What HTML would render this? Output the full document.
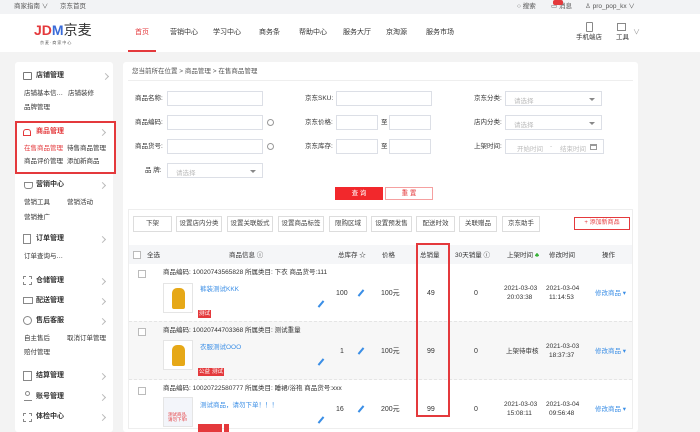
<!DOCTYPE html>
<html><head><meta charset="utf-8"><style>
*{margin:0;padding:0;box-sizing:border-box}
body{width:700px;height:428px;overflow:hidden;background:#f3f3f3;font-family:"Liberation Sans","Noto Sans CJK SC",sans-serif;color:#333;position:relative}
.a{position:absolute;white-space:nowrap}
.t{position:absolute;white-space:nowrap;font-size:7px;line-height:8px}
.in{position:absolute;border:1px solid #dcdfe6;background:#fff;height:15px}
.ph{font-size:6.5px;color:#bbb;position:absolute;left:8px;top:3px}
.dd{position:absolute;right:6px;top:6px;border-left:3px solid transparent;border-right:3px solid transparent;border-top:3px solid #888}
.btn{position:absolute;top:216px;height:16px;border:1px solid #ddd;background:#fff;font-size:6.5px;text-align:center;line-height:14px;color:#444}
.q{position:absolute;width:7px;height:7px;border:1px solid #999;border-radius:50%}
.cb{position:absolute;width:8px;height:8px;border:1px solid #bbb;background:#fff}
.blue{color:#3a8ee6}
.tag{position:absolute;background:#e4393c;color:#fff;font-size:5.5px;line-height:8px;padding:0 1px}
.img{position:absolute;width:30px;height:30px;border:1px solid #e5e5e5;background:#fff}
.pen{position:absolute;width:2px;height:8px;background:#3a8ee6;transform:rotate(40deg)}
.arr{position:absolute;right:8px;width:5px;height:5px;border-top:1px solid #bbb;border-right:1px solid #bbb;transform:rotate(45deg)}
</style></head><body>
<!-- top bar -->
<div class="a" style="left:0;top:0;width:700px;height:14px;background:#f2f3f5"></div>
<div class="t" style="left:14px;top:3px;color:#555;font-size:6.5px">商家指南 ∨</div>
<div class="t" style="left:60px;top:3px;color:#555;font-size:6.5px">京东首页</div>
<div class="t" style="left:517px;top:3px;color:#555;font-size:6.5px">○ 搜索</div>
<div class="t" style="left:551px;top:3px;color:#555;font-size:6.5px">▭ 消息</div>
<div class="a" style="left:553px;top:0;width:10px;height:5px;background:#e4393c;border-radius:2px"></div>
<div class="t" style="left:585px;top:3px;color:#555;font-size:6.5px">♙ pro_pop_kx ∨</div>
<!-- header -->
<div class="a" style="left:0;top:14px;width:700px;height:38px;background:#fff"></div>
<div class="a" style="left:34px;top:23px;font-size:14px;font-weight:bold;line-height:14px"><span style="color:#e4393c">JD</span><span style="color:#3a6bd8">M</span><span style="color:#333;font-weight:normal">京麦</span></div>
<div class="t" style="left:40px;top:39px;font-size:4px;color:#555;letter-spacing:1px">京麦·商家中心</div>
<div class="t" style="left:135px;top:29px;color:#e4393c">首页</div>
<div class="a" style="left:128px;top:50px;width:28px;height:2px;background:#e4393c"></div>
<div class="t" style="left:170px;top:29px">营销中心</div>
<div class="t" style="left:213px;top:29px">学习中心</div>
<div class="t" style="left:259px;top:29px">商务条</div>
<div class="t" style="left:299px;top:29px">帮助中心</div>
<div class="t" style="left:343px;top:29px">服务大厅</div>
<div class="t" style="left:386px;top:29px">京淘源</div>
<div class="t" style="left:426px;top:29px">服务市场</div>
<div class="a" style="left:586px;top:22px;width:7px;height:10px;border:1px solid #888;border-radius:1px"></div>
<div class="t" style="left:576px;top:34px;font-size:6.5px">手机端店</div>
<div class="a" style="left:617px;top:23px;width:9px;height:8px;border:1px solid #888"></div>
<div class="t" style="left:616px;top:34px;font-size:6.5px">工具</div>
<div class="t" style="left:633px;top:29px;color:#999">∨</div>
<!-- sidebar -->
<div class="a" style="left:15px;top:62px;width:98px;height:370px;background:#fff;border-radius:3px"></div>
<div class="a" style="left:23px;top:72px;width:9px;height:8px;border:1px solid #777;border-radius:1px"></div>
<div class="t" style="left:36px;top:72px;font-weight:bold">店铺管理</div><div class="arr" style="left:103px;top:74px"></div>
<div class="t" style="left:24px;top:90px;font-size:6.5px">店铺基本信…</div><div class="t" style="left:68px;top:90px;font-size:6.5px">店铺装修</div>
<div class="t" style="left:24px;top:104px;font-size:6.5px">品牌管理</div>
<div class="a" style="left:15px;top:121px;width:101px;height:53px;border:2px solid #e4393c;background:#fff"></div>
<div class="a" style="left:23px;top:129px;width:8px;height:7px;border:1px solid #e4393c;border-radius:3px 3px 0 0"></div>
<div class="t" style="left:36px;top:128px;font-weight:bold;color:#e4393c">商品管理</div><div class="arr" style="left:100px;top:130px"></div>
<div class="t" style="left:24px;top:145px;font-size:6.5px;color:#e4393c">在售商品管理</div><div class="t" style="left:67px;top:145px;font-size:6.5px">待售商品管理</div>
<div class="t" style="left:24px;top:158px;font-size:6.5px">商品评价管理</div><div class="t" style="left:67px;top:158px;font-size:6.5px">添加新商品</div>
<div class="a" style="left:24px;top:182px;width:9px;height:7px;border:1px solid #888;border-radius:0 0 3px 3px"></div>
<div class="t" style="left:36px;top:181px;font-weight:bold">营销中心</div><div class="arr" style="left:100px;top:183px"></div>
<div class="t" style="left:24px;top:199px;font-size:6.5px">营销工具</div><div class="t" style="left:67px;top:199px;font-size:6.5px">营销活动</div>
<div class="t" style="left:24px;top:214px;font-size:6.5px">营销推广</div>
<div class="a" style="left:23px;top:234px;width:8px;height:10px;border:1px solid #888"></div>
<div class="t" style="left:36px;top:235px;font-weight:bold">订单管理</div><div class="arr" style="left:100px;top:237px"></div>
<div class="t" style="left:24px;top:253px;font-size:6.5px">订单查询与…</div>
<div class="a" style="left:23px;top:276px;width:9px;height:9px;border:1px dashed #888"></div>
<div class="t" style="left:36px;top:277px;font-weight:bold">仓储管理</div><div class="arr" style="left:100px;top:279px"></div>
<div class="a" style="left:23px;top:297px;width:10px;height:7px;border:1px solid #888"></div>
<div class="t" style="left:36px;top:297px;font-weight:bold">配送管理</div><div class="arr" style="left:100px;top:299px"></div>
<div class="a" style="left:23px;top:316px;width:9px;height:9px;border:1px solid #888;border-radius:50%"></div>
<div class="t" style="left:36px;top:317px;font-weight:bold">售后客服</div><div class="arr" style="left:100px;top:319px"></div>
<div class="t" style="left:24px;top:335px;font-size:6.5px">自主售后</div><div class="t" style="left:67px;top:335px;font-size:6.5px">取消订单管理</div>
<div class="t" style="left:24px;top:349px;font-size:6.5px">赔付管理</div>
<div class="a" style="left:23px;top:371px;width:9px;height:10px;border:1px solid #888"></div>
<div class="t" style="left:36px;top:372px;font-weight:bold">结算管理</div><div class="arr" style="left:100px;top:374px"></div>
<div class="a" style="left:24px;top:392px;width:8px;height:9px;border-bottom:1px solid #888"></div>
<div class="a" style="left:25px;top:391px;width:5px;height:5px;border:1px solid #888;border-radius:50%"></div>
<div class="t" style="left:36px;top:393px;font-weight:bold">账号管理</div><div class="arr" style="left:100px;top:395px"></div>
<div class="a" style="left:23px;top:413px;width:9px;height:9px;border:1px dashed #888"></div>
<div class="t" style="left:36px;top:413px;font-weight:bold">体检中心</div><div class="arr" style="left:100px;top:415px"></div>
<!-- main panel -->
<div class="a" style="left:123px;top:62px;width:515px;height:370px;background:#fff;border-radius:3px"></div>
<div class="t" style="left:132px;top:68px;font-size:6.5px;color:#555">您当前所在位置 &gt; 商品管理 &gt; 在售商品管理</div>
<div class="a" style="left:128px;top:80px;width:505px;height:1px;background:#eee"></div>
<!-- form -->
<div class="t" style="left:135px;top:95px;font-size:6.5px">商品名称:</div><div class="in" style="left:167px;top:91px;width:96px"></div>
<div class="t" style="left:305px;top:95px;font-size:6.5px">京东SKU:</div><div class="in" style="left:336px;top:91px;width:96px"></div>
<div class="t" style="left:474px;top:95px;font-size:6.5px">京东分类:</div><div class="in" style="left:505px;top:91px;width:97px"><span class="ph">请选择</span><i class="dd"></i></div>

<div class="t" style="left:135px;top:119px;font-size:6.5px">商品编码:</div><div class="in" style="left:167px;top:115px;width:96px"></div><div class="q" style="left:267px;top:119px"></div>
<div class="t" style="left:305px;top:119px;font-size:6.5px">京东价格:</div><div class="in" style="left:336px;top:115px;width:42px"></div><div class="t" style="left:381px;top:119px;font-size:6.5px">至</div><div class="in" style="left:389px;top:115px;width:42px"></div>
<div class="t" style="left:474px;top:119px;font-size:6.5px">店内分类:</div><div class="in" style="left:505px;top:115px;width:97px"><span class="ph">请选择</span><i class="dd"></i></div>

<div class="t" style="left:135px;top:143px;font-size:6.5px">商品货号:</div><div class="in" style="left:167px;top:139px;width:96px"></div><div class="q" style="left:267px;top:143px"></div>
<div class="t" style="left:305px;top:143px;font-size:6.5px">京东库存:</div><div class="in" style="left:336px;top:139px;width:42px"></div><div class="t" style="left:381px;top:143px;font-size:6.5px">至</div><div class="in" style="left:389px;top:139px;width:42px"></div>
<div class="t" style="left:474px;top:143px;font-size:6.5px">上架时间:</div><div class="in" style="left:505px;top:139px;width:99px"><span class="ph" style="left:11px">开始时间</span><span class="ph" style="left:44px">-</span><span class="ph" style="left:54px">结束时间</span><span class="a" style="right:6px;top:4px;width:7px;height:6px;border:1px solid #999;border-top-width:2px"></span></div>

<div class="t" style="left:145px;top:167px;font-size:6.5px">品 牌:</div><div class="in" style="left:167px;top:163px;width:96px"><span class="ph">请选择</span><i class="dd"></i></div>
<div class="a" style="left:335px;top:187px;width:48px;height:13px;background:#f2282c;color:#fff;font-size:6.5px;text-align:center;line-height:13px">查 询</div>
<div class="a" style="left:385px;top:187px;width:48px;height:13px;border:1px solid #f5a0a0;color:#e4393c;font-size:6.5px;text-align:center;line-height:11px">重 置</div>
<!-- toolbar -->
<div class="a" style="left:128px;top:209px;width:505px;height:220px;border:1px solid #eee"></div>
<div class="btn" style="left:133px;width:39px">下架</div>
<div class="btn" style="left:176px;width:46px">设置店内分类</div>
<div class="btn" style="left:227px;width:46px">设置关联版式</div>
<div class="btn" style="left:278px;width:46px">设置商品标签</div>
<div class="btn" style="left:329px;width:38px">限购区域</div>
<div class="btn" style="left:371px;width:41px">设置预发售</div>
<div class="btn" style="left:416px;width:39px">配送时效</div>
<div class="btn" style="left:459px;width:38px">关联赠品</div>
<div class="btn" style="left:502px;width:38px">京东助手</div>
<div class="a" style="left:574px;top:217px;width:56px;height:13px;border:1px solid #e4393c;color:#e4393c;font-size:6px;text-align:center;line-height:11px">+ 添加新商品</div>
<!-- table header -->
<div class="a" style="left:129px;top:245px;width:503px;height:19px;background:#f5f6f8"></div>
<div class="cb" style="left:133px;top:251px"></div>
<div class="t" style="left:147px;top:252px;font-size:6.5px">全选</div>
<div class="t" style="left:229px;top:252px;font-size:6.5px">商品信息 ⓘ</div>
<div class="t" style="left:338px;top:252px;font-size:6.5px">总库存 ☆</div>
<div class="t" style="left:382px;top:252px;font-size:6.5px">价格</div>
<div class="t" style="left:420px;top:252px;font-size:6.5px">总销量</div>
<div class="t" style="left:455px;top:252px;font-size:6.5px">30天销量 ⓘ</div>
<div class="t" style="left:507px;top:252px;font-size:6.5px">上架时间 <span style="color:#2a2">♣</span></div>
<div class="t" style="left:549px;top:252px;font-size:6.5px">修改时间</div>
<div class="t" style="left:602px;top:252px;font-size:6.5px">操作</div>
<!-- rows -->
<div class="a" style="left:129px;top:321px;width:503px;height:59px;background:#f7f7f7;border-top:1px dashed #e5e5e5;border-bottom:1px dashed #e5e5e5"></div>
<!-- row1 -->
<div class="cb" style="left:138px;top:270px"></div>
<div class="t" style="left:163px;top:269px;font-size:6.5px">商品编码: 10020743565828 所属类目: 下衣 商品货号:111</div>
<div class="img" style="left:163px;top:283px"><div class="a" style="left:8px;top:4px;width:13px;height:21px;background:#e6a817;border-radius:5px 5px 2px 2px"></div></div>
<div class="t blue" style="left:200px;top:286px;font-size:6.5px">裤装测试KKK</div>
<div class="tag" style="left:198px;top:310px">测试</div>
<div class="pen" style="left:320px;top:300px"></div>
<div class="t" style="left:336px;top:290px">100</div><div class="pen" style="left:360px;top:289px"></div>
<div class="t" style="left:381px;top:290px">100元</div>
<div class="t" style="left:427px;top:290px">49</div>
<div class="t" style="left:474px;top:290px">0</div>
<div class="t" style="left:504px;top:285px;font-size:6.5px">2021-03-03</div><div class="t" style="left:507px;top:294px;font-size:6.5px">20:03:38</div>
<div class="t" style="left:546px;top:285px;font-size:6.5px">2021-03-04</div><div class="t" style="left:549px;top:294px;font-size:6.5px">11:14:53</div>
<div class="t blue" style="left:595px;top:290px;font-size:6.5px">修改商品 ▾</div>
<!-- row2 -->
<div class="cb" style="left:138px;top:328px"></div>
<div class="t" style="left:163px;top:327px;font-size:6.5px">商品编码: 10020744703368 所属类目: 测试重量</div>
<div class="img" style="left:163px;top:340px"><div class="a" style="left:8px;top:4px;width:13px;height:21px;background:#e6a817;border-radius:5px 5px 2px 2px"></div></div>
<div class="t blue" style="left:200px;top:344px;font-size:6.5px">衣服测试OOO</div>
<div class="tag" style="left:198px;top:368px">公益</div><div class="tag" style="left:211px;top:368px">测试</div>
<div class="pen" style="left:320px;top:358px"></div>
<div class="t" style="left:340px;top:348px">1</div><div class="pen" style="left:360px;top:347px"></div>
<div class="t" style="left:381px;top:348px">100元</div>
<div class="t" style="left:427px;top:348px">99</div>
<div class="t" style="left:474px;top:348px">0</div>
<div class="t" style="left:506px;top:348px;font-size:6.5px">上架待审核</div>
<div class="t" style="left:546px;top:343px;font-size:6.5px">2021-03-03</div><div class="t" style="left:549px;top:352px;font-size:6.5px">18:37:37</div>
<div class="t blue" style="left:595px;top:348px;font-size:6.5px">修改商品 ▾</div>
<!-- row3 -->
<div class="cb" style="left:138px;top:387px"></div>
<div class="t" style="left:163px;top:385px;font-size:6.5px">商品编码: 10020722580777 所属类目: 睡裙/浴袍 商品货号:xxx</div>
<div class="img" style="left:163px;top:397px;background:#f3f5fa"><div class="t" style="left:4px;top:14px;font-size:4.5px;color:#e4393c;line-height:5px">测试商品,<br>请勿下单!</div></div>
<div class="t blue" style="left:200px;top:402px;font-size:6.5px">测试商品，请勿下单！！！</div>
<div class="tag" style="left:198px;top:424px;width:24px">&nbsp;</div><div class="tag" style="left:224px;top:424px">&nbsp;&nbsp;</div>
<div class="pen" style="left:320px;top:416px"></div>
<div class="t" style="left:336px;top:406px">16</div><div class="pen" style="left:360px;top:405px"></div>
<div class="t" style="left:381px;top:406px">200元</div>
<div class="t" style="left:427px;top:406px">99</div>
<div class="t" style="left:474px;top:406px">0</div>
<div class="t" style="left:504px;top:401px;font-size:6.5px">2021-03-03</div><div class="t" style="left:507px;top:410px;font-size:6.5px">15:08:11</div>
<div class="t" style="left:546px;top:401px;font-size:6.5px">2021-03-04</div><div class="t" style="left:549px;top:410px;font-size:6.5px">09:56:48</div>
<div class="t blue" style="left:595px;top:406px;font-size:6.5px">修改商品 ▾</div>
<!-- highlight -->
<div class="a" style="left:416px;top:243px;width:34px;height:174px;border:2px solid #e4393c"></div>
</body></html>
